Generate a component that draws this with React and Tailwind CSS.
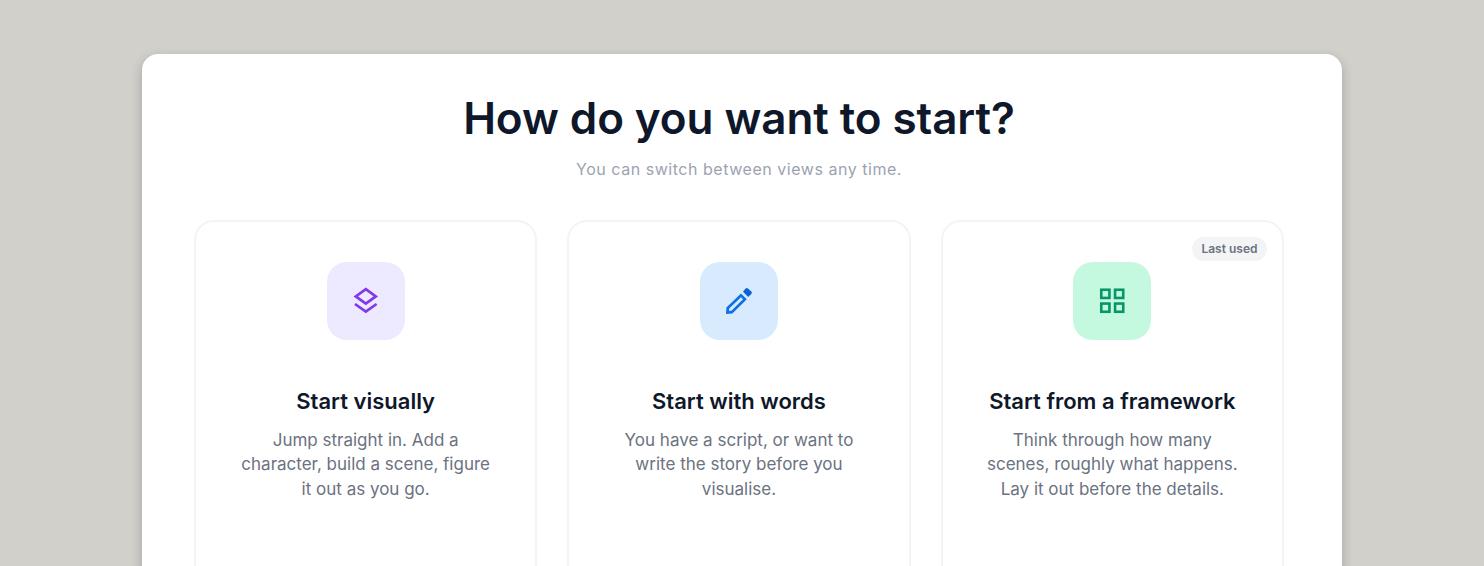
const font = { fontFamily: 'Inter, sans-serif' }

function LayersIcon() {
  return (
    <svg width="28" height="28" viewBox="0 0 28 28" fill="none" stroke="#8338ec" strokeWidth="2.7">
      <path d="M13.8 2.2 L23.8 9.4 L13.8 16.6 L3.8 9.4 Z" />
      <path d="M3 17 L13.8 24.6 L24.6 17" />
    </svg>
  )
}

function PencilIcon() {
  return (
    <svg width="28" height="28" viewBox="0 0 28 28" fill="none">
      <path d="M1 27 L1.4 20.6 L16 6.4 L21.8 12.2 L7.4 26.6 Z M4 24 L6.4 23.8 L18 12.2 L16 10.2 L4.2 21.6 Z" fill="#0f6fe8" fillRule="evenodd" />
      <path d="M18 4.8 L20.6 1.4 Q21.8 0.4 23 1.4 L26.4 4.6 Q27.4 5.8 26.4 7 L23.2 10 Z" fill="#0a63d6" />
    </svg>
  )
}

function GridIcon() {
  return (
    <svg width="28" height="28" viewBox="0 0 28 28" fill="none" stroke="#059669" strokeWidth="2.6">
      <rect x="3.25" y="2.75" width="8.2" height="8.2" />
      <rect x="17.05" y="2.75" width="8.2" height="8.2" />
      <rect x="3.25" y="16.55" width="8.2" height="8.2" />
      <rect x="17.05" y="16.55" width="8.2" height="8.2" />
    </svg>
  )
}

const options = [
  { icon: LayersIcon, tint: 'bg-[#ede9fe]', title: 'Start visually', lines: ['Jump straight in. Add a', 'character, build a scene, figure', 'it out as you go.'] },
  { icon: PencilIcon, tint: 'bg-[#d8ebfe]', title: 'Start with words', lines: ['You have a script, or want to', 'write the story before you', 'visualise.'] },
  { icon: GridIcon, tint: 'bg-[#c4f9e0]', title: 'Start from a framework', lines: ['Think through how many', 'scenes, roughly what happens.', 'Lay it out before the details.'], badge: 'Last used' },
]

export default function App() {
  return (
    <div style={font} className="h-[566px] overflow-hidden bg-[#d1d0cb] pt-[54px]">
      <div className="mx-auto w-[1200px] h-[640px] rounded-2xl bg-white pl-[52px] pr-[58px] pt-[36px] shadow-[0_4px_12px_rgba(0,0,0,0.22)]">
        <h1 className="text-center text-[44px] leading-[56px] font-semibold tracking-[-0.08px] text-[#0f172a]">How do you want to start?</h1>
        <p className="mt-[11px] text-center text-base leading-[24px] tracking-[0.53px] text-[#9ca3af]">You can switch between views any time.</p>
        <div className="mt-[39px] grid grid-cols-3 gap-[30px]">
          {options.map(({ icon: Icon, tint, title, lines, badge }) => (
            <div key={title} className="relative h-[400px] rounded-[20px] border-2 border-[#f3f4f6] pt-[40px] text-center">
              {badge && (
                <span className="absolute right-[15px] top-[15px] rounded-full bg-[#f3f4f6] px-[9.5px] py-[4px] text-xs leading-[16px] font-semibold text-[#6b7280]">{badge}</span>
              )}
              <div className={`mx-auto flex h-[78px] w-[78px] items-center justify-center rounded-[20px] ${tint}`}>
                <Icon />
              </div>
              <h3 className="mt-[45px] text-[22px] leading-[32px] font-semibold text-[#0f172a]">{title}</h3>
              <p className="mt-[10.5px] text-[17px] leading-[24.5px] text-[#6b7280]">
                {lines.map((l) => (
                  <span key={l} className="block">{l}</span>
                ))}
              </p>
            </div>
          ))}
        </div>
      </div>
    </div>
  )
}
